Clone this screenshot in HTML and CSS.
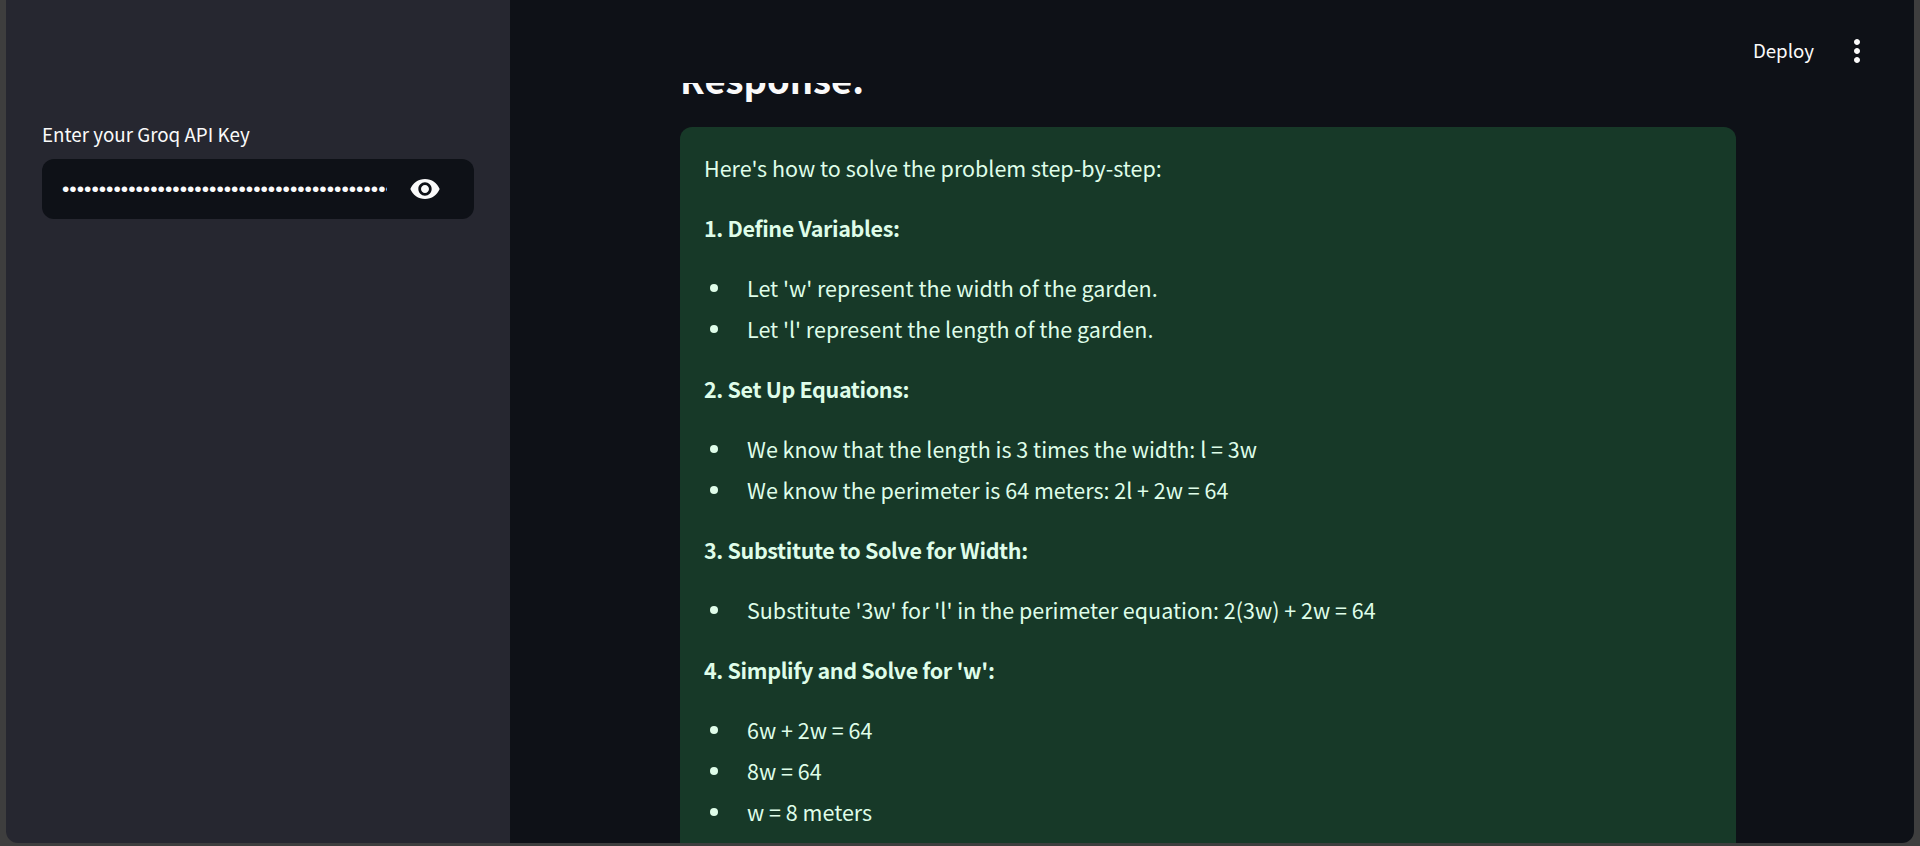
FILE: index.html
```html
<!DOCTYPE html>
<html lang="en">
<head>
<meta charset="utf-8">
<title>Groq</title>
<link rel="stylesheet" href="styles.css">
</head>
<body>
<div class="app">
  <aside class="sidebar">
    <label class="field-label" for="key">Enter your Groq API Key</label>
    <div class="field">
      <input class="field-input" id="key" type="password" value="gsk_aaaaaaaaaaaaaaaaaaaaaaaaaaaaaaaaaaaaaaaaaaaaaaaaaaaaaaaaaaaaaaaaa" readonly>
      <svg class="eye" viewBox="0 0 24 24" aria-hidden="true"><path d="M12 4.5C7 4.5 2.73 7.61 1 12c1.73 4.39 6 7.5 11 7.5s9.27-3.11 11-7.5c-1.73-4.39-6-7.5-11-7.5zM12 17c-2.76 0-5-2.24-5-5s2.24-5 5-5 5 2.24 5 5-2.24 5-5 5zm0-8c-1.66 0-3 1.34-3 3s1.34 3 3 3 3-1.34 3-3-1.34-3-3-3z"/></svg>
    </div>
  </aside>
  <main class="main">
    <header class="topbar">
      <span class="deploy">Deploy</span>
      <svg class="more" viewBox="0 0 24 24" aria-hidden="true"><path d="M12 8c1.1 0 2-.9 2-2s-.9-2-2-2-2 .9-2 2 .9 2 2 2zm0 2c-1.1 0-2 .9-2 2s.9 2 2 2 2-.9 2-2-.9-2-2-2zm0 6c-1.1 0-2 .9-2 2s.9 2 2 2 2-.9 2-2-.9-2-2-2z"/></svg>
    </header>
    <div class="content">
      <h3 class="title">Response:</h3>
      <section class="answer">
        <p>Here's how to solve the problem step-by-step:</p>
        <p><strong>1. Define Variables:</strong></p>
        <ul>
          <li>Let 'w' represent the width of the garden.</li>
          <li>Let 'l' represent the length of the garden.</li>
        </ul>
        <p><strong>2. Set Up Equations:</strong></p>
        <ul>
          <li>We know that the length is 3 times the width: l = 3w</li>
          <li>We know the perimeter is 64 meters: 2l + 2w = 64</li>
        </ul>
        <p><strong>3. Substitute to Solve for Width:</strong></p>
        <ul>
          <li>Substitute '3w' for 'l' in the perimeter equation: 2(3w) + 2w = 64</li>
        </ul>
        <p><strong>4. Simplify and Solve for 'w':</strong></p>
        <ul>
          <li>6w + 2w = 64</li>
          <li>8w = 64</li>
          <li>w = 8 meters</li>
        </ul>
      </section>
    </div>
  </main>
</div>
</body>
</html>
```

FILE: styles.css
```css
* { box-sizing: border-box; }
html, body { height: 100%; margin: 0; overflow: hidden; }
body {
  background: #3e3e3e;
  padding: 0 6px 3px;
  font-family: "Noto Sans CJK SC", "Noto Sans", sans-serif;
  color: #fafafa;
}
.app {
  display: flex;
  height: 100%;
  overflow: hidden;
  border-radius: 0 0 12px 12px;
}
.sidebar {
  flex: 0 0 504px;
  background: #262730;
  padding: 118px 36px 0;
}
.field-label {
  display: block;
  font-size: 18.8px;
  line-height: 32px;
  margin-bottom: 9px;
}
.field {
  display: flex;
  align-items: center;
  height: 60px;
  padding: 0 33px 0 20px;
  background: #0e1117;
  border-radius: 12px;
}
.field-input {
  flex: 1;
  min-width: 0;
  padding: 0;
  border: 0;
  outline: 0;
  background: transparent;
  color: #fafafa;
  font-family: "Liberation Sans", sans-serif;
  font-size: 21px;
}
.eye {
  flex: none;
  width: 32px;
  height: 32px;
  margin-left: 22px;
  fill: #fafafa;
}
.main {
  position: relative;
  flex: 1;
  overflow: hidden;
  background: #0e1117;
}
.topbar {
  position: absolute;
  top: 0;
  left: 0;
  right: 0;
  z-index: 2;
  height: 83px;
  display: flex;
  align-items: flex-start;
  justify-content: flex-end;
  gap: 25px;
  padding: 33px 39px 0 0;
  background: #0e1117;
}
.deploy { font-size: 18.7px; line-height: 34px; }
.more { width: 36px; height: 36px; fill: #fafafa; }
.content { padding: 50px 178px 0 170px; }
.title {
  margin: 0 0 20px;
  font-size: 36.4px;
  line-height: 57px;
  font-weight: 700;
}
.answer {
  padding: 22px 24px 24px;
  background: #173928;
  border-radius: 12px;
  color: #dffde9;
  font-size: 21.5px;
  line-height: 38.4px;
}
.answer p { margin: 0 0 21.6px; }
.answer strong { font-weight: 700; letter-spacing: -0.35px; }
.answer ul { margin: 0 0 21.6px; padding: 0; list-style: none; }
.answer li { display: flex; align-items: center; gap: 29px; padding-left: 6px; }
.answer li::before {
  content: "";
  flex: none;
  width: 8px;
  height: 8px;
  border-radius: 50%;
  background: currentColor;
}
.answer li + li { margin-top: 2.6px; }
```
